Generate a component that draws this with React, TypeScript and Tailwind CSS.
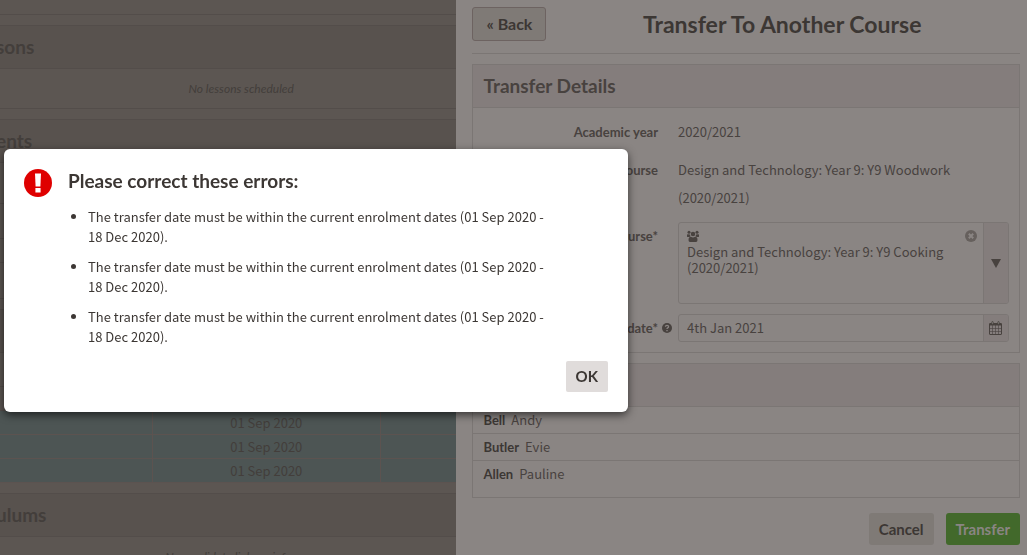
import React, { useState } from 'react';

const errors = [
  'The transfer date must be within the current enrolment dates (01 Sep 2020 - 18 Dec 2020).',
  'The transfer date must be within the current enrolment dates (01 Sep 2020 - 18 Dec 2020).',
  'The transfer date must be within the current enrolment dates (01 Sep 2020 - 18 Dec 2020).',
];

const students = [
  { surname: 'Bell', forename: 'Andy' },
  { surname: 'Butler', forename: 'Evie' },
  { surname: 'Allen', forename: 'Pauline' },
];

const enrolments = ['01 Sep 2020', '01 Sep 2020', '01 Sep 2020'];

function UsersIcon() {
  return (
    <svg className="block h-3 w-3" viewBox="0 0 24 24" fill="currentColor" aria-hidden="true">
      <circle cx="4" cy="4.5" r="3" />
      <circle cx="20" cy="4.5" r="3" />
      <circle cx="12" cy="8" r="4.5" />
      <path d="M0 13V10Q0 8 2 8.500L6 9Q6 11 7.500 12.500Q6 13 5 14H2Q0 14 0 13Z" />
      <path d="M24 13V10Q24 8 22 8.500L18 9Q18 11 16.500 12.500Q18 13 19 14H22Q24 14 24 13Z" />
      <path d="M3 20Q3 13.500 8 13.500Q12 16 16 13.500Q21 13.500 21 20Q21 24 18 24H6Q3 24 3 20Z" />
    </svg>
  );
}

function CalendarIcon() {
  return (
    <svg className="block h-[14px] w-[13px]" viewBox="0 0 13 14" fill="none" stroke="currentColor" aria-hidden="true">
      <rect x="0.5" y="2.5" width="12" height="11" rx="0.5" />
      <path d="M0.500 3.500H12.500" strokeWidth="2" />
      <path d="M0.500 7.500H12.500M0.500 10.500H12.500M3.500 4V13.500M6.500 4V13.500M9.500 4V13.500" strokeWidth="0.6" />
      <rect x="2.8" y="0.5" width="1.4" height="3" rx="0.7" fill="#8a8583" strokeWidth="0.8" />
      <rect x="8.8" y="0.5" width="1.4" height="3" rx="0.7" fill="#8a8583" strokeWidth="0.8" />
    </svg>
  );
}

function ClearIcon() {
  return (
    <svg className="block h-3 w-3" viewBox="0 0 12 12" aria-hidden="true">
      <circle cx="6" cy="6" r="6" fill="#66605d" />
      <path d="M3.800 3.800L8.200 8.200M8.200 3.800L3.800 8.200" stroke="#8a8583" strokeWidth="2" />
    </svg>
  );
}

function HelpIcon() {
  return (
    <svg className="block h-[10px] w-[10px]" viewBox="0 0 10 10" fill="none" aria-hidden="true">
      <circle cx="5" cy="5" r="5" fill="#48423f" />
      <path d="M3.400 3.700Q3.500 2.300 5 2.300Q6.600 2.300 6.600 3.700Q6.600 4.500 5.700 4.900Q5 5.200 5 6.100" stroke="#8a8583" strokeWidth="1.3" />
      <path d="M4.300 7H5.700V8.200H4.300Z" fill="#8a8583" />
    </svg>
  );
}

function ErrorIcon() {
  return (
    <svg className="block h-7 w-7 shrink-0" viewBox="0 0 28 28" aria-hidden="true">
      <circle cx="14" cy="14" r="14" fill="#df0000" />
      <path d="M11 4.500H17L16.400 17.500H11.600Z" fill="#fff" />
      <path d="M11.400 19H16.600V23.500H11.400Z" fill="#fff" />
    </svg>
  );
}

function CourseHeading({ children }: { children: React.ReactNode }) {
  return (
    <h2 className="border-b border-[#534d4a] bg-[#58524e] py-2 font-[Lato,sans-serif] text-[19px]/[26px] font-bold">
      <span className="-ml-1">{children}</span>
    </h2>
  );
}

function CoursePage() {
  return (
    <main className="min-w-0 flex-1 overflow-hidden bg-[#5c5652] text-[#433e3b]">
      <div className="h-[15px] border-b border-[#534d4a]" />

      <section className="mt-[10px] border-y border-[#534d4a]">
        <CourseHeading>sons</CourseHeading>
        <p className="py-[10px] pl-[26px] text-center font-[Lato,sans-serif] text-xs/[19px] italic">No lessons scheduled</p>
      </section>

      <section className="mt-[10px] border-t border-[#534d4a]">
        <CourseHeading>ents</CourseHeading>
        <div className="h-[41px] border-b border-[#534d4a]" />
        <div className="h-[35px] border-b border-[#534d4a]" />
        <div className="h-6 border-b border-[#534d4a]" />
        <div className="h-9 border-b border-[#534d4a]" />
      </section>

      <section className="mt-[10px] border-t border-[#534d4a]">
        <CourseHeading>&nbsp;</CourseHeading>
        <div className="h-[34px] border-b border-[#534d4a]" />
        <div className="h-6 border-b border-[#534d4a]" />
        <table className="w-full border-collapse bg-[#4d5554] text-[13px]/[23px]">
          <tbody>
            {enrolments.map((date, index) => (
              <tr key={index} className="border-b border-[#5c5350]">
                <td className="w-1/3 border-r border-[#5c5350]" />
                <td className="w-1/2 border-r border-[#5c5350] text-center">{date}</td>
                <td />
              </tr>
            ))}
          </tbody>
        </table>
      </section>

      <section className="mt-[10px] border-t border-[#534d4a]">
        <CourseHeading>ulums</CourseHeading>
        <p className="py-[10px] text-center font-[Lato,sans-serif] text-xs/[19px] italic">No candidate linkage info</p>
      </section>
    </main>
  );
}

function TransferForm() {
  const [date, setDate] = useState('4th Jan 2021');
  const [course, setCourse] = useState('Design and Technology: Year 9: Y9 Cooking (2020/2021)');

  return (
    <form className="flex flex-col gap-[10px] py-[10px] leading-7">
      <div className="flex">
        <span className="w-3/8 pr-5 text-right font-[Lato,sans-serif] font-bold">Academic year</span>
        <span className="w-5/8 pr-[10px]">2020/2021</span>
      </div>
      <div className="flex">
        <span className="w-3/8 pr-5 text-right font-[Lato,sans-serif] font-bold">Current course</span>
        <span className="w-5/8 pr-[50px]">Design and Technology: Year 9: Y9 Woodwork (2020/2021)</span>
      </div>
      <div className="flex">
        <label htmlFor="new-course" className="w-3/8 pr-5 text-right font-[Lato,sans-serif] font-bold">New course*</label>
        <div className="w-5/8 pr-[10px]">
          <div className="flex h-[82px] overflow-hidden rounded-[3px] border border-[#7b7674]">
            <div className="flex-1 py-[7px] pl-2 pr-[6px] leading-4">
              <div className="flex items-center justify-between pb-[2px]">
                <UsersIcon />
                <button type="button" aria-label="Clear course" onClick={() => setCourse('')}>
                  <ClearIcon />
                </button>
              </div>
              <div>{course}</div>
            </div>
            <button
              id="new-course"
              type="button"
              aria-haspopup="listbox"
              className="flex w-[25px] items-center justify-center border-l border-[#7b7674] bg-[#847d7c]"
            >
              <svg className="h-[9px] w-[10px]" viewBox="0 0 10 9" fill="currentColor" aria-hidden="true">
                <path d="M0 0H10L5 9Z" />
              </svg>
            </button>
          </div>
        </div>
      </div>
      <div className="flex">
        <div className="flex w-3/8 items-center justify-end gap-1 pr-[6px]">
          <label htmlFor="transfer-date" className="font-[Lato,sans-serif] font-bold">Transfer date*</label>
          <HelpIcon />
        </div>
        <div className="w-5/8 pr-[10px]">
          <div className="flex h-7 overflow-hidden rounded-[3px] border border-[#7b7674]">
            <input
              id="transfer-date"
              type="text"
              value={date}
              onChange={(e) => setDate(e.target.value)}
              className="min-w-0 flex-1 px-2 outline-none"
            />
            <button
              type="button"
              aria-label="Choose date"
              className="flex w-[25px] items-center justify-center border-l border-[#7b7674] bg-[#847d7c]"
            >
              <CalendarIcon />
            </button>
          </div>
        </div>
      </div>
    </form>
  );
}

function TransferPanel() {
  return (
    <aside className="w-5/9 shrink-0 bg-[#8a8583] pl-4 pr-[7px] text-[13px] text-[#48423f]">
      <header className="flex items-center border-b border-[#7b7674] pb-3 pt-[7px] font-[Lato,sans-serif]">
        <button type="button" className="h-[34px] rounded-[3px] border border-[#6d6361] bg-[#7f7a76] px-[13px] text-base font-bold text-[#3c3734]">
          « Back
        </button>
        <h1 className="flex-1 pr-[2px] text-center text-[23px]/[34px] font-bold text-[#3c3734]">Transfer To Another Course</h1>
      </header>

      <section className="mt-[10px] border border-[#7b7674]">
        <h2 className="border-b border-[#7b7674] bg-[#847d7c] px-[10px] py-2 font-[Lato,sans-serif] text-[19px]/[26px] font-bold">Transfer Details</h2>
        <TransferForm />
      </section>

      <section className="mt-[10px] border border-[#7b7674] pb-[10px]">
        <h2 className="border-b border-[#7b7674] bg-[#847d7c] px-[10px] py-2 font-[Lato,sans-serif] text-[19px]/[26px] font-bold">Students</h2>
        <ul className="divide-y divide-[#7b7674]">
          {students.map((student) => (
            <li key={student.surname} className="flex gap-[6px] px-[10px] leading-[26px]">
              <strong className="font-[Lato,sans-serif] text-[#3c3734]">{student.surname}</strong>
              {student.forename}
            </li>
          ))}
        </ul>
      </section>

      <div className="mt-[15px] flex justify-end gap-3 font-[Lato,sans-serif] text-[15px] font-bold">
        <button type="button" className="h-8 rounded-[3px] bg-[#7f7a76] px-[10px] text-[#3c3734]">Cancel</button>
        <button type="button" className="h-8 rounded-[3px] bg-[#42692b] px-[10px] text-[#8a8583]">Transfer</button>
      </div>
    </aside>
  );
}

function ErrorDialog({ onClose }: { onClose: () => void }) {
  return (
    <div
      role="alertdialog"
      aria-labelledby="error-title"
      className="fixed left-1 top-[149px] w-[624px] rounded-md bg-white p-5 text-[#3c3734] shadow-[0_3px_8px_rgba(0,0,0,0.6)]"
    >
      <div className="flex gap-4">
        <ErrorIcon />
        <div>
          <h2 id="error-title" className="font-[Lato,sans-serif] text-[19px]/6 font-bold">Please correct these errors:</h2>
          <ul className="mt-[14px] flex list-disc flex-col gap-[10px] pl-5 pr-[54px] text-[13px]/5">
            {errors.map((error, index) => (
              <li key={index}>{error}</li>
            ))}
          </ul>
        </div>
      </div>
      <div className="mt-[14px] flex justify-end">
        <button
          type="button"
          onClick={onClose}
          className="h-[31px] rounded-[2px] bg-[#e0dcdb] px-[10px] font-[Lato,sans-serif] text-[15px] font-bold"
        >
          OK
        </button>
      </div>
    </div>
  );
}

function App() {
  const [showErrors, setShowErrors] = useState(true);

  return (
    <div className="flex h-screen overflow-hidden font-['Noto_Sans_CJK_SC',sans-serif]">
      <CoursePage />
      <TransferPanel />
      {showErrors && <ErrorDialog onClose={() => setShowErrors(false)} />}
    </div>
  );
}

export default App;
